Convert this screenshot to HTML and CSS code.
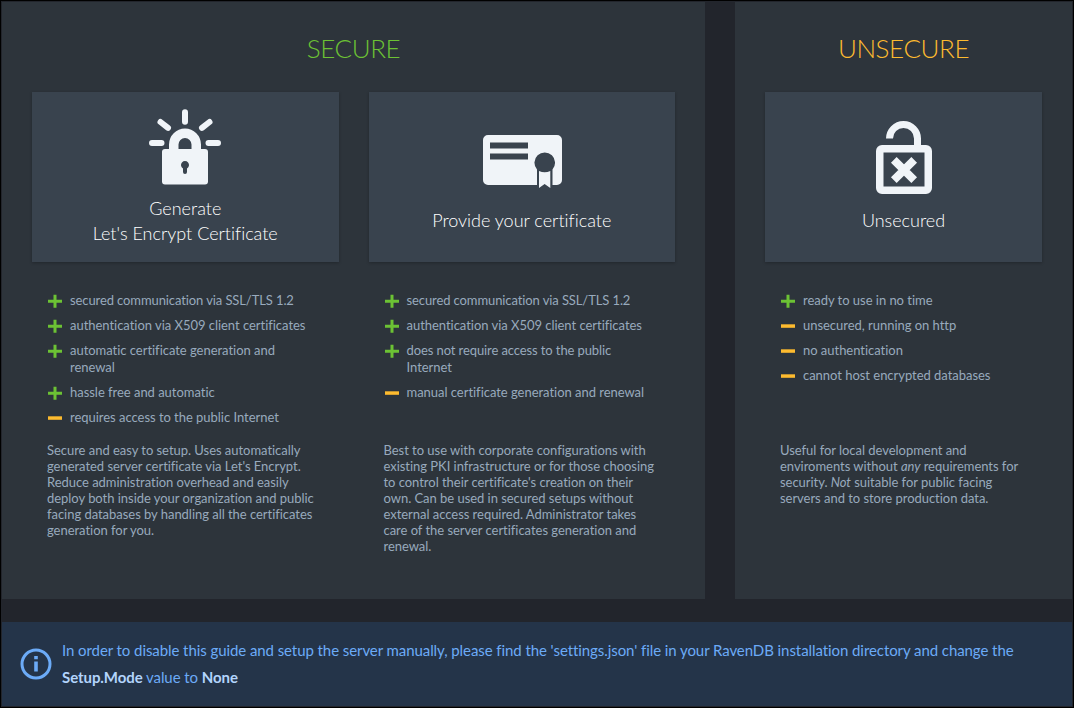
FILE: index.html
```html
<!DOCTYPE html>
<html lang="en">
<head>
<meta charset="utf-8">
<title>Setup Wizard</title>
<link rel="stylesheet" href="styles.css">
</head>
<body>
<svg class="defs" width="0" height="0">
  <symbol id="plus" viewBox="0 0 14 14"><path d="M5.500 0.700h3v5H14v3H8.500v5h-3v-5H0v-3h5.500z"/></symbol>
  <symbol id="minus" viewBox="0 0 14 14"><path d="M0 5.300h14v3.500H0z"/></symbol>
</svg>
<main class="window">
  <div class="panels">
    <section class="panel panel-secure">
      <h2 class="title secure">SECURE</h2>
      <div class="options">
        <div class="option">
          <div class="card">
            <svg class="card-icon lock" viewBox="0 0 72 76">
              <g stroke="currentColor" stroke-width="6" stroke-linecap="round" fill="none">
                <path d="M36 3.200v9.500M11.500 13l7.500 5.800M60.500 13L53 18.800M3 34h9.500M69 34h-9.500"/>
              </g>
              <path fill="currentColor" fill-rule="evenodd" d="M20 40v-4.500a16 16 0 0 1 32 0V40h4a3 3 0 0 1 3 3v29.500a3 3 0 0 1-3 3H16a3 3 0 0 1-3-3V43a3 3 0 0 1 3-3zM29.500 40h13v-4.500a6.500 6.500 0 0 0-13 0zM34 59.500V63a2 2 0 0 0 4 0v-3.500a4 4 0 1 0-4 0z"/>
            </svg>
            <div class="card-label">Generate<br>Let's Encrypt Certificate</div>
          </div>
          <ul class="list">
            <li><svg class="plus"><use href="#plus"/></svg><span class="tight">secured communication via SSL/TLS 1.2</span></li>
            <li><svg class="plus"><use href="#plus"/></svg>authentication via X509 client certificates</li>
            <li><svg class="plus"><use href="#plus"/></svg>automatic certificate generation and<br>renewal</li>
            <li><svg class="plus"><use href="#plus"/></svg>hassle free and automatic</li>
            <li><svg class="minus"><use href="#minus"/></svg>requires access to the public Internet</li>
          </ul>
          <p class="text">Secure and easy to setup. Uses automatically<br>generated server certificate via Let's Encrypt.<br>Reduce administration overhead and easily<br>deploy both inside your organization and public<br>facing databases by handling all the certificates<br>generation for you.</p>
        </div>
        <div class="option">
          <div class="card">
            <svg class="card-icon cert" viewBox="0 0 80 54">
              <path fill="currentColor" fill-rule="evenodd" d="M5 0h69a5 5 0 0 1 5 5v40a5 5 0 0 1-5 5h-4.500V34.500a10.300 10.300 0 1 0-15.500 0V50H5a5 5 0 0 1-5-5V5a5 5 0 0 1 5-5zM7 7.500v6h38v-6zM7 18.500v6h38v-6z"/>
              <path fill="currentColor" d="M56 36q5.700 2.400 11.300 0v17l-5.700-4L56 53z"/>
            </svg>
            <div class="card-label">Provide your certificate</div>
          </div>
          <ul class="list">
            <li><svg class="plus"><use href="#plus"/></svg><span class="tight">secured communication via SSL/TLS 1.2</span></li>
            <li><svg class="plus"><use href="#plus"/></svg>authentication via X509 client certificates</li>
            <li><svg class="plus"><use href="#plus"/></svg><span class="tight">does not require access to the public</span><br>Internet</li>
            <li><svg class="minus"><use href="#minus"/></svg>manual certificate generation and renewal</li>
          </ul>
          <p class="text">Best to use with corporate configurations with<br>existing PKI infrastructure or for those choosing<br>to control their certificate's creation on their<br>own. Can be used in secured setups without<br>external access required. Administrator takes<br>care of the server certificates generation and<br>renewal.</p>
        </div>
      </div>
    </section>
    <section class="panel panel-unsecure">
      <h2 class="title unsecure">UNSECURE</h2>
      <div class="options">
        <div class="option">
          <div class="card">
            <svg class="card-icon open" viewBox="0 0 56 74">
              <path fill="none" stroke="currentColor" stroke-width="7" d="M13.500 18.500a14 14 0 0 1 28 0V28"/>
              <path fill="currentColor" fill-rule="evenodd" d="M6 25h44a6 6 0 0 1 6 6v37a6 6 0 0 1-6 6H6a6 6 0 0 1-6-6V31a6 6 0 0 1 6-6zM7.500 32.500v34h41v-34z"/>
              <path fill="none" stroke="currentColor" stroke-width="8" d="M17.800 39.800l20.400 20.400M38.200 39.800L17.800 60.200"/>
            </svg>
            <div class="card-label">Unsecured</div>
          </div>
          <ul class="list">
            <li><svg class="plus"><use href="#plus"/></svg>ready to use in no time</li>
            <li><svg class="minus"><use href="#minus"/></svg>unsecured, running on http</li>
            <li><svg class="minus"><use href="#minus"/></svg>no authentication</li>
            <li><svg class="minus"><use href="#minus"/></svg>cannot host encrypted databases</li>
          </ul>
          <p class="text">Useful for local development and<br>enviroments without <em>any</em> requirements for<br>security. <em>Not</em> suitable for public facing<br>servers and to store production data.</p>
        </div>
      </div>
    </section>
  </div>
  <aside class="notice">
    <svg class="info" viewBox="0 0 32 32"><circle cx="16" cy="16" r="14" fill="none" stroke="currentColor" stroke-width="3"/><path fill="currentColor" d="M14.200 8h3.600v3.200h-3.600zM14.200 13.500h3.600V23.500h-3.600z"/></svg>
    <div class="notice-text">In order to disable this guide and setup the server manually, please find the 'settings.json' file in your RavenDB installation directory and change the<br><b>Setup.Mode</b> value to <b>None</b></div>
  </aside>
</main>
</body>
</html>
```

FILE: styles.css
```css
* { box-sizing: border-box; }
body { margin: 0; font-family: Lato, "Open Sans", sans-serif; background: #22252c; }
.defs { display: block; }
.window {
  width: 1074px;
  height: 708px;
  border: 1px solid #000;
  padding: 1px;
  background: #22252c;
  overflow: hidden;
}
.panels { display: flex; gap: 30px; height: 597px; margin-bottom: 23px; }
.panel { background: #2d343b; padding: 28px 30px 0; }
.panel-secure { width: 703px; }
.panel-unsecure { width: 337px; }
.title {
  margin: 0 0 26px;
  height: 36px;
  font-size: 26px;
  line-height: 36px;
  font-weight: 300;
  letter-spacing: -0.4px;
  text-align: center;
}
.secure { color: #6cc234; }
.unsecure { color: #fdbb2f; }
.options { display: flex; gap: 30px; }
.option { flex: 1; min-width: 0; }
.card {
  height: 170px;
  background: #39434e;
  color: #f0f4f8;
  box-shadow: 0 1px 3px rgba(0, 0, 0, 0.25);
  display: flex;
  flex-direction: column;
  align-items: center;
}
.card-icon { display: block; flex: none; }
.lock { width: 72px; height: 76px; margin: 17px 0 11px; }
.cert { width: 80px; height: 54px; margin: 43px 0 19px 2px; }
.open { width: 56px; height: 74px; margin: 28px 0 14px; }
.card-label {
  color: #fff;
  font-size: 18px;
  line-height: 25px;
  font-weight: 300;
  letter-spacing: -0.01px;
  text-align: center;
  white-space: nowrap;
}
.list {
  list-style: none;
  margin: 30px 0 0;
  padding: 0 0 0 16px;
  height: 150px;
  color: #98aabd;
  font-size: 13px;
  line-height: 17px;
  letter-spacing: -0.03px;
  white-space: nowrap;
}
.list li { padding-left: 22px; margin-bottom: 8px; }
.list svg { float: left; width: 14px; height: 14px; margin: 2px 0 0 -22px; }
.tight { letter-spacing: -0.1px; }
.plus { fill: #6cc234; }
.minus { fill: #fdbb2f; }
.text {
  margin: 0;
  padding-left: 15px;
  color: #98aabd;
  font-size: 13px;
  line-height: 16px;
  letter-spacing: -0.035px;
  white-space: nowrap;
}
.notice {
  height: 84px;
  background: #243449;
  color: #6cabf7;
  display: flex;
  align-items: center;
  padding-left: 18px;
  gap: 10px;
}
.info { width: 32px; height: 32px; flex: none; margin-bottom: 1px; }
.notice-text { font-size: 15px; line-height: 27px; letter-spacing: -0.075px; white-space: nowrap; }
.notice-text b { color: #b3d4fc; font-weight: 700; }
```
